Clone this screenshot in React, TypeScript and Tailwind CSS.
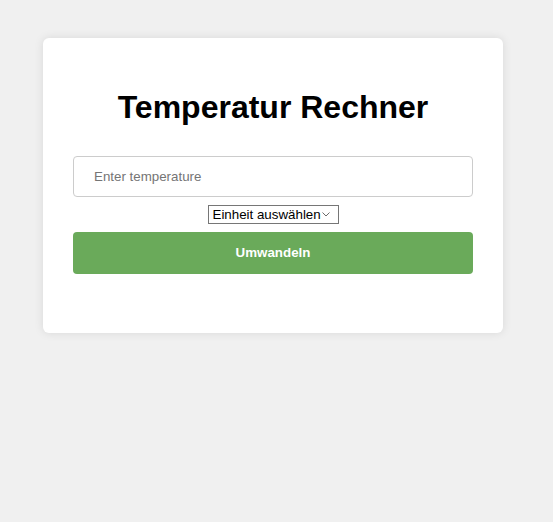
export default function App() {
  return (
    <div className="min-h-[522px] bg-[#f0f0f0] pt-[38px] font-['Liberation_Sans',Arial,sans-serif]">
      <div className="ml-[43px] flex w-[460px] flex-col rounded-[6px] bg-white px-[30px] pb-[59px] pt-[30px] shadow-[0_0_10px_rgba(0,0,0,0.1)]">
        <h1 className="mt-[21px] h-[37px] text-center text-[32px] font-bold leading-[37px] text-black">
          Temperatur Rechner
        </h1>
        <input
          type="number"
          placeholder="Enter temperature"
          className="mt-[30px] h-[41px] w-full rounded-[4px] border border-[#cccccc] px-[20px] text-[13.33px] text-black outline-none placeholder:text-[#757575]"
        />
        <div className="mt-[8px] flex h-[19px] justify-center">
          <div className="relative flex">
            <select
              defaultValue=""
              className="block h-[19px] w-[131px] appearance-none border border-[#767676] bg-white pl-[4px] pr-[16px] text-[13.33px] leading-[17px] text-black"
            >
              <option value="" disabled>
                Einheit auswählen
              </option>
              <option value="c">Celsius</option>
              <option value="f">Fahrenheit</option>
              <option value="k">Kelvin</option>
            </select>
            <svg
              className="pointer-events-none absolute right-[9px] top-[7px] block"
              width="8"
              height="5"
              viewBox="0 0 8 5"
              fill="none"
            >
              <path d="M0.5 0.5 L4 4 L7.5 0.5" stroke="#6b6b6b" strokeWidth="1" />
            </svg>
          </div>
        </div>
        <button className="mt-[8px] h-[42px] w-full rounded-[4px] bg-[#6aaa5a] text-[13.33px] font-bold text-white">
          Umwandeln
        </button>
      </div>
    </div>
  );
}
